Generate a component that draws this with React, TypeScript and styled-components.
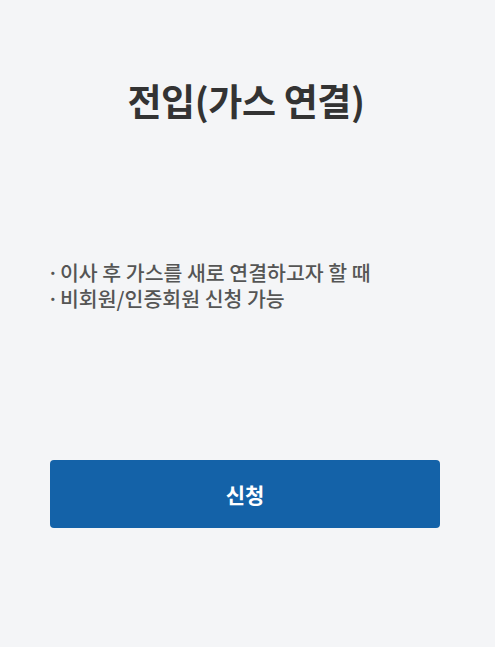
import styled, { createGlobalStyle } from 'styled-components';

const GlobalStyle = createGlobalStyle`
    html, body {
        margin: 0;
        padding: 0;
        background-color: #f4f5f7;
    }
    body {
        font-family: "Noto Sans CJK KR", "Noto Sans", sans-serif;
    }
`;

const notes = [
    '이사 후 가스를 새로 연결하고자 할 때',
    '비회원/인증회원 신청 가능',
];

const App = () => {
    return (
        <>
            <GlobalStyle />
            <Page>
                <Title>전입(가스 연결)</Title>
                <NoteList>
                    {notes.map(note => (
                        <Note key={note}>
                            <Bullet>·</Bullet>
                            {note}
                        </Note>
                    ))}
                </NoteList>
                <ApplyButton type="button">신청</ApplyButton>
            </Page>
        </>
    );
}

const Page = styled.div`
    width: 495px;
    height: 647px;
    box-sizing: border-box;
    padding: 74px 55px 0 48px;
    display: flex;
    flex-direction: column;
`;

const Title = styled.h1`
    margin: 0 0 0 4px;
    font-size: 37px;
    font-weight: 700;
    color: #333333;
    text-align: center;
    line-height: 52px;
    letter-spacing: -0.4px;
`;

const NoteList = styled.ul`
    list-style: none;
    margin: 133px 0 0;
    padding: 0;
    display: flex;
    flex-direction: column;
`;

const Note = styled.li`
    display: flex;
    align-items: baseline;
    font-size: 20.5px;
    font-weight: 500;
    color: #555555;
    line-height: 26px;
    letter-spacing: 0;
`;

const Bullet = styled.span`
    flex: none;
    width: 13px;
    margin-left: -1px;
`;

const ApplyButton = styled.button`
    margin: 149px 0 0 2px;
    height: 68px;
    border: none;
    border-radius: 4px;
    background-color: #1462a8;
    color: #ffffff;
    font-family: inherit;
    font-size: 21px;
    font-weight: 700;
    cursor: pointer;
`;

export default App;
